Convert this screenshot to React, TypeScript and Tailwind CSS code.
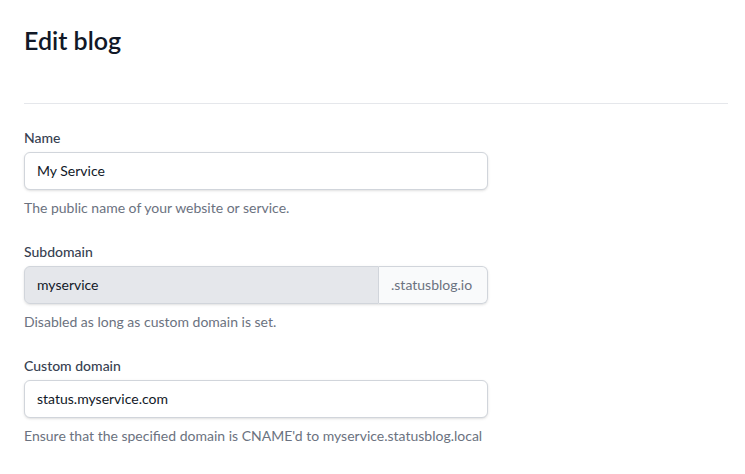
export default function App() {
  const font = { fontFamily: 'Lato, "Noto Sans", sans-serif' };
  return (
    <div className="min-h-screen bg-white" style={font}>
      <div className="pl-6 pr-[17px] pt-6">
        <h1 className="text-[25px] leading-8 font-semibold text-[#111827]">Edit blog</h1>
        <div className="mt-[47px] border-t border-[#e5e7eb]" />
        <div className="mt-6 w-[464px] flex flex-col gap-6">
          <div>
            <label className="block text-sm leading-5 font-medium text-[#374151]">Name</label>
            <div className="mt-1 flex h-[38px] items-center rounded-md border border-[#d1d5db] bg-white px-3 text-sm text-[#111827] shadow-sm">
              My Service
            </div>
            <p className="mt-2 text-sm leading-5 text-[#6b7280]">The public name of your website or service.</p>
          </div>
          <div>
            <label className="block text-sm leading-5 font-medium text-[#374151]">Subdomain</label>
            <div className="mt-1 flex h-[38px] rounded-md shadow-sm">
              <div className="flex flex-1 items-center rounded-l-md border border-[#d1d5db] bg-[#e5e7eb] px-3 text-sm text-[#111827]">
                myservice
              </div>
              <div className="flex w-[109px] items-center rounded-r-md border border-l-0 border-[#d1d5db] bg-[#f9fafb] px-3 text-sm text-[#6b7280]">
                .statusblog.io
              </div>
            </div>
            <p className="mt-2 text-sm leading-5 text-[#6b7280]">Disabled as long as custom domain is set.</p>
          </div>
          <div>
            <label className="block text-sm leading-5 font-medium text-[#374151]">Custom domain</label>
            <div className="mt-1 flex h-[38px] items-center rounded-md border border-[#d1d5db] bg-white px-3 text-sm text-[#111827] shadow-sm">
              status.myservice.com
            </div>
            <p className="mt-2 text-sm leading-5 text-[#6b7280] whitespace-nowrap">Ensure that the specified domain is CNAME'd to myservice.statusblog.local</p>
          </div>
        </div>
      </div>
    </div>
  );
}
